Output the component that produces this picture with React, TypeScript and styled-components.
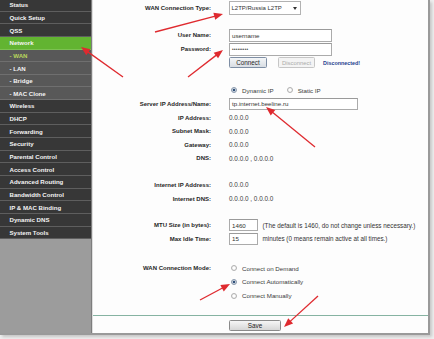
import React from "react";
import styled, { createGlobalStyle } from "styled-components";

const Global = createGlobalStyle`
  html, body { margin: 0; padding: 0; background: #f1f1f1; }
  body { width: 434px; height: 339px; overflow: hidden; font-family: "Liberation Sans", Arial, sans-serif; }
`;

const Stage = styled.div`
  position: relative;
  width: 434px;
  height: 339px;
  background: #f0f0f0;
`;

const Frame = styled.div`
  display: flex;
  width: 428px;
  height: 333px;
  border-right: 2px solid #9a9a9a;
  border-bottom: 2px solid #9a9a9a;
  box-shadow: 2px 2px 3px rgba(0, 0, 0, 0.18);
  background: #fdfdfd;
  overflow: hidden;
`;

const Sidebar = styled.nav`
  width: 91px;
  flex: none;
  background: #9c9c9c;
  border-right: 1px solid #7d7d7d;
`;

const Menu = styled.ul`
  list-style: none;
  margin: -1px 0 0;
  padding: 0;
  display: flex;
  flex-direction: column;
`;

type Kind = "top" | "sub" | "active";

const MenuItem = styled.li<{ $kind: Kind; $current?: boolean }>`
  height: 12.65px;
  box-sizing: border-box;
  display: flex;
  align-items: center;
  padding-left: 9.5px;
  font: bold 6.1px "Liberation Sans", Arial, sans-serif;
  white-space: nowrap;
  color: ${(p) => (p.$current ? "#b9d65c" : "#f4f4f4")};
  background: ${(p) =>
    p.$kind === "active" ? "#62b431" : p.$kind === "sub" ? "#585858" : "#373737"};
  border-bottom: 1px solid
    ${(p) => (p.$kind === "active" ? "#7cc152" : p.$kind === "sub" ? "#6f6f6f" : "#5e5e5e")};
`;

const Main = styled.main`
  flex: 1;
  display: flex;
  flex-direction: column;
  padding-top: 1.2px;
  background: #fdfdfd;
  border-left: 1px solid #dedede;
  color: #2a2a2a;
`;

const Row = styled.div<{ $gap?: number }>`
  display: grid;
  grid-template-columns: 118px 1fr;
  column-gap: 18px;
  height: 13.6px;
  align-items: center;
  margin-top: ${(p) => p.$gap ?? 0}px;
`;

const Label = styled.div`
  text-align: right;
  font: bold 6px "Liberation Sans", Arial, sans-serif;
  color: #262626;
  white-space: nowrap;
`;

const Cell = styled.div`
  display: flex;
  align-items: center;
  white-space: nowrap;
  font: 6.4px "Liberation Sans", Arial, sans-serif;
  color: #3a3a3a;
`;

const SelectBox = styled.div`
  box-sizing: border-box;
  width: 72px;
  height: 14px;
  display: flex;
  align-items: center;
  justify-content: space-between;
  padding: 0 3px 0 1.5px;
  border: 1px solid #b2b2b2;
  background: #ffffff;
  font: 6px "Liberation Sans", Arial, sans-serif;
  color: #333;
`;

const Field = styled.div<{ $w: number; $h?: number }>`
  box-sizing: border-box;
  width: ${(p) => p.$w}px;
  height: ${(p) => p.$h ?? 13}px;
  display: flex;
  align-items: center;
  padding-left: 2px;
  border: 1px solid #ababab;
  border-top-color: #9a9a9a;
  background: #ffffff;
  font: 6.2px "Liberation Sans", Arial, sans-serif;
  color: #333;
`;

const Dots = styled.span`
  font-size: 4.6px;
  letter-spacing: 0.2px;
  color: #444;
`;

const Button = styled.div<{ $w: number; $disabled?: boolean }>`
  box-sizing: border-box;
  width: ${(p) => p.$w}px;
  height: 11px;
  display: flex;
  align-items: center;
  justify-content: center;
  border: 1px solid ${(p) => (p.$disabled ? "#c6c6c6" : "#7e8ea4")};
  border-radius: 1.5px;
  background: ${(p) =>
    p.$disabled ? "#f4f4f4" : "linear-gradient(#f4f6f8, #d8dde3)"};
  font: ${(p) => (p.$disabled ? "5.9px" : "6.3px")} "Liberation Sans", Arial, sans-serif;
  color: ${(p) => (p.$disabled ? "#ababab" : "#262626")};
  margin-right: ${(p) => (p.$disabled ? 8 : 11)}px;
`;

const Status = styled.span`
  font: bold 5.4px "Liberation Sans", Arial, sans-serif;
  color: #1f438f;
`;

const Radio = styled.span<{ $checked?: boolean }>`
  box-sizing: border-box;
  width: 6px;
  height: 6px;
  margin: 0 5px 0 2px;
  border-radius: 50%;
  flex: none;
  border: 1px solid ${(p) => (p.$checked ? "#8797ab" : "#b0b0b0")};
  background: ${(p) =>
    p.$checked
      ? "radial-gradient(circle, #2f5079 0 1.4px, #d8dee6 1.6px)"
      : "radial-gradient(circle, #ffffff 0 1px, #dcdcdc 3px)"};
`;

const RadioText = styled.span<{ $after?: number }>`
  font: 6.2px "Liberation Sans", Arial, sans-serif;
  color: #3a3a3a;
  margin-right: ${(p) => p.$after ?? 0}px;
`;

const Help = styled.span`
  margin-left: 4.5px;
  font: 6.3px "Liberation Sans", Arial, sans-serif;
  color: #333;
`;

const Divider = styled.hr`
  margin: 12.5px 0 0;
  height: 1px;
  border: none;
  background: #86b3a2;
`;

const SaveRow = styled.div`
  display: grid;
  grid-template-columns: 118px 1fr;
  column-gap: 18px;
  margin-top: 4.3px;
`;

const SaveButton = styled.div`
  box-sizing: border-box;
  width: 52px;
  height: 11px;
  display: flex;
  align-items: center;
  justify-content: center;
  border: 1px solid #8a8a8a;
  border-radius: 1.5px;
  background: linear-gradient(#f6f6f6, #d6d6d6);
  font: 6.4px "Liberation Sans", Arial, sans-serif;
  color: #222;
`;

const Overlay = styled.svg`
  position: absolute;
  left: 0;
  top: 0;
  pointer-events: none;
`;

const menu: { text: string; kind: Kind; current?: boolean }[] = [
  { text: "Status", kind: "top" },
  { text: "Quick Setup", kind: "top" },
  { text: "QSS", kind: "top" },
  { text: "Network", kind: "active" },
  { text: "- WAN", kind: "sub", current: true },
  { text: "- LAN", kind: "sub" },
  { text: "- Bridge", kind: "sub" },
  { text: "- MAC Clone", kind: "sub" },
  { text: "Wireless", kind: "top" },
  { text: "DHCP", kind: "top" },
  { text: "Forwarding", kind: "top" },
  { text: "Security", kind: "top" },
  { text: "Parental Control", kind: "top" },
  { text: "Access Control", kind: "top" },
  { text: "Advanced Routing", kind: "top" },
  { text: "Bandwidth Control", kind: "top" },
  { text: "IP & MAC Binding", kind: "top" },
  { text: "Dynamic DNS", kind: "top" },
  { text: "System Tools", kind: "top" },
];

const arrows: [number, number, number, number][] = [
  [123, 77, 81, 47],
  [155, 32, 223, 14],
  [188, 77, 223, 50],
  [315, 147, 266, 107],
  [200, 300, 230, 284],
  [318, 296, 284, 327],
];

function Arrow({ a }: { a: [number, number, number, number] }) {
  const [x1, y1, x2, y2] = a;
  const dx = x2 - x1;
  const dy = y2 - y1;
  const L = Math.hypot(dx, dy);
  const ux = dx / L;
  const uy = dy / L;
  const hl = 9;
  const hw = 3.6;
  const bx = x2 - ux * hl;
  const by = y2 - uy * hl;
  const px = -uy;
  const py = ux;
  const pts = `${x2},${y2} ${bx + px * hw},${by + py * hw} ${bx - px * hw},${by - py * hw}`;
  return (
    <g>
      <line x1={x1} y1={y1} x2={bx + ux} y2={by + uy} stroke="#df2a2f" strokeWidth={1.3} />
      <polygon points={pts} fill="#df2a2f" />
    </g>
  );
}

function Value({ children }: { children: React.ReactNode }) {
  return <Cell>{children}</Cell>;
}

export default function App() {
  return (
    <Stage>
      <Global />
      <Frame>
        <Sidebar>
          <Menu>
            {menu.map((m) => (
              <MenuItem key={m.text} $kind={m.kind} $current={m.current}>
                {m.text}
              </MenuItem>
            ))}
          </Menu>
        </Sidebar>
        <Main>
          <Row>
            <Label>WAN Connection Type:</Label>
            <Cell>
              <SelectBox>
                <span>L2TP/Russia L2TP</span>
                <svg width="4" height="3" viewBox="0 0 4 3">
                  <path d="M0 0 L4 0 L2 3 Z" fill="#333" />
                </svg>
              </SelectBox>
            </Cell>
          </Row>

          <Row $gap={13.9}>
            <Label>User Name:</Label>
            <Cell>
              <Field $w={103}>username</Field>
            </Cell>
          </Row>
          <Row>
            <Label>Password:</Label>
            <Cell>
              <Field $w={103}>
                <Dots>•••••••••</Dots>
              </Field>
            </Cell>
          </Row>
          <Row>
            <Label />
            <Cell>
              <Button $w={38}>Connect</Button>
              <Button $w={37} $disabled>
                Disconnect
              </Button>
              <Status>Disconnected!</Status>
            </Cell>
          </Row>

          <Row $gap={14.1}>
            <Label />
            <Cell>
              <Radio $checked />
              <RadioText $after={11}>Dynamic IP</RadioText>
              <Radio />
              <RadioText>Static IP</RadioText>
            </Cell>
          </Row>
          <Row>
            <Label>Server IP Address/Name:</Label>
            <Cell>
              <Field $w={129} $h={12}>
                tp.internet.beeline.ru
              </Field>
            </Cell>
          </Row>
          <Row>
            <Label>IP Address:</Label>
            <Value>0.0.0.0</Value>
          </Row>
          <Row>
            <Label>Subnet Mask:</Label>
            <Value>0.0.0.0</Value>
          </Row>
          <Row>
            <Label>Gateway:</Label>
            <Value>0.0.0.0</Value>
          </Row>
          <Row>
            <Label>DNS:</Label>
            <Value>0.0.0.0 , 0.0.0.0</Value>
          </Row>

          <Row $gap={13}>
            <Label>Internet IP Address:</Label>
            <Value>0.0.0.0</Value>
          </Row>
          <Row>
            <Label>Internet DNS:</Label>
            <Value>0.0.0.0 , 0.0.0.0</Value>
          </Row>

          <Row $gap={13.3}>
            <Label>MTU Size (in bytes):</Label>
            <Cell>
              <Field $w={29} $h={12}>
                1460
              </Field>
              <Help>(The default is 1460, do not change unless necessary.)</Help>
            </Cell>
          </Row>
          <Row>
            <Label>Max Idle Time:</Label>
            <Cell>
              <Field $w={29} $h={12}>
                15
              </Field>
              <Help>minutes (0 means remain active at all times.)</Help>
            </Cell>
          </Row>

          <Row $gap={15.8}>
            <Label>WAN Connection Mode:</Label>
            <Cell>
              <Radio />
              <RadioText>Connect on Demand</RadioText>
            </Cell>
          </Row>
          <Row>
            <Label />
            <Cell>
              <Radio $checked />
              <RadioText>Connect Automatically</RadioText>
            </Cell>
          </Row>
          <Row>
            <Label />
            <Cell>
              <Radio />
              <RadioText>Connect Manually</RadioText>
            </Cell>
          </Row>

          <Divider />
          <SaveRow>
            <Label />
            <div>
              <SaveButton>Save</SaveButton>
            </div>
          </SaveRow>
        </Main>
      </Frame>
      <Overlay width={434} height={339} viewBox="0 0 434 339">
        {arrows.map((a, i) => (
          <Arrow key={i} a={a} />
        ))}
      </Overlay>
    </Stage>
  );
}
